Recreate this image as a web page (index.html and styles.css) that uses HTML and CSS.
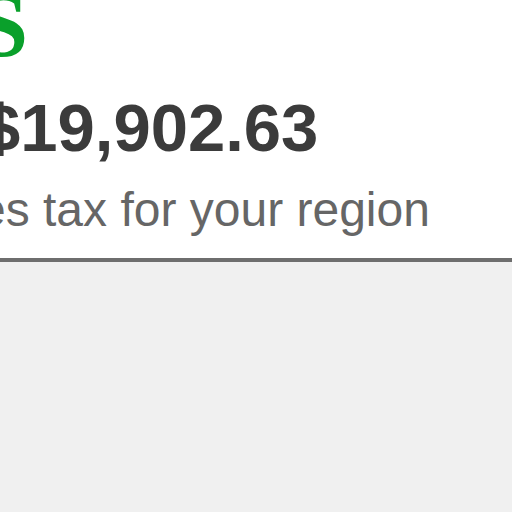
FILE: index.html
```html
<!DOCTYPE html>
<html>
<head>
<meta charset="utf-8">
<link rel="stylesheet" href="styles.css">
</head>
<body>
<section class="summary">
  <div class="summary-inner">
    <h1 class="title">S</h1>
    <div class="amount">$19,902.63</div>
    <p class="note">es tax for your region</p>
  </div>
</section>
<section class="below"></section>
</body>
</html>
```
FILE: styles.css
```css
html, body {
  margin: 0;
  padding: 0;
  height: 100%;
}
body {
  background: #f0f0f0;
  overflow: hidden;
}
.summary {
  background: #ffffff;
  border-bottom: 4px solid #6e6e6e;
  height: 262px;
  box-sizing: border-box;
}
.summary-inner {
  margin-left: -21px;
}
.title {
  margin: 0 0 0 -2px;
  font-family: "Liberation Serif", serif;
  font-weight: bold;
  font-size: 92px;
  line-height: 50px;
  height: 50px;
  color: #0aa02b;
}
.amount {
  margin-top: 38px;
  margin-left: 4px;
  font-family: "Liberation Sans", Arial, sans-serif;
  font-weight: bold;
  font-size: 67px;
  line-height: 80px;
  color: #3b3b3b;
}
.note {
  margin: 14px 0 0;
  font-family: "Liberation Sans", Arial, sans-serif;
  font-size: 48px;
  line-height: 56px;
  color: #666666;
  white-space: nowrap;
}
.below {
  background: #f0f0f0;
}
```
